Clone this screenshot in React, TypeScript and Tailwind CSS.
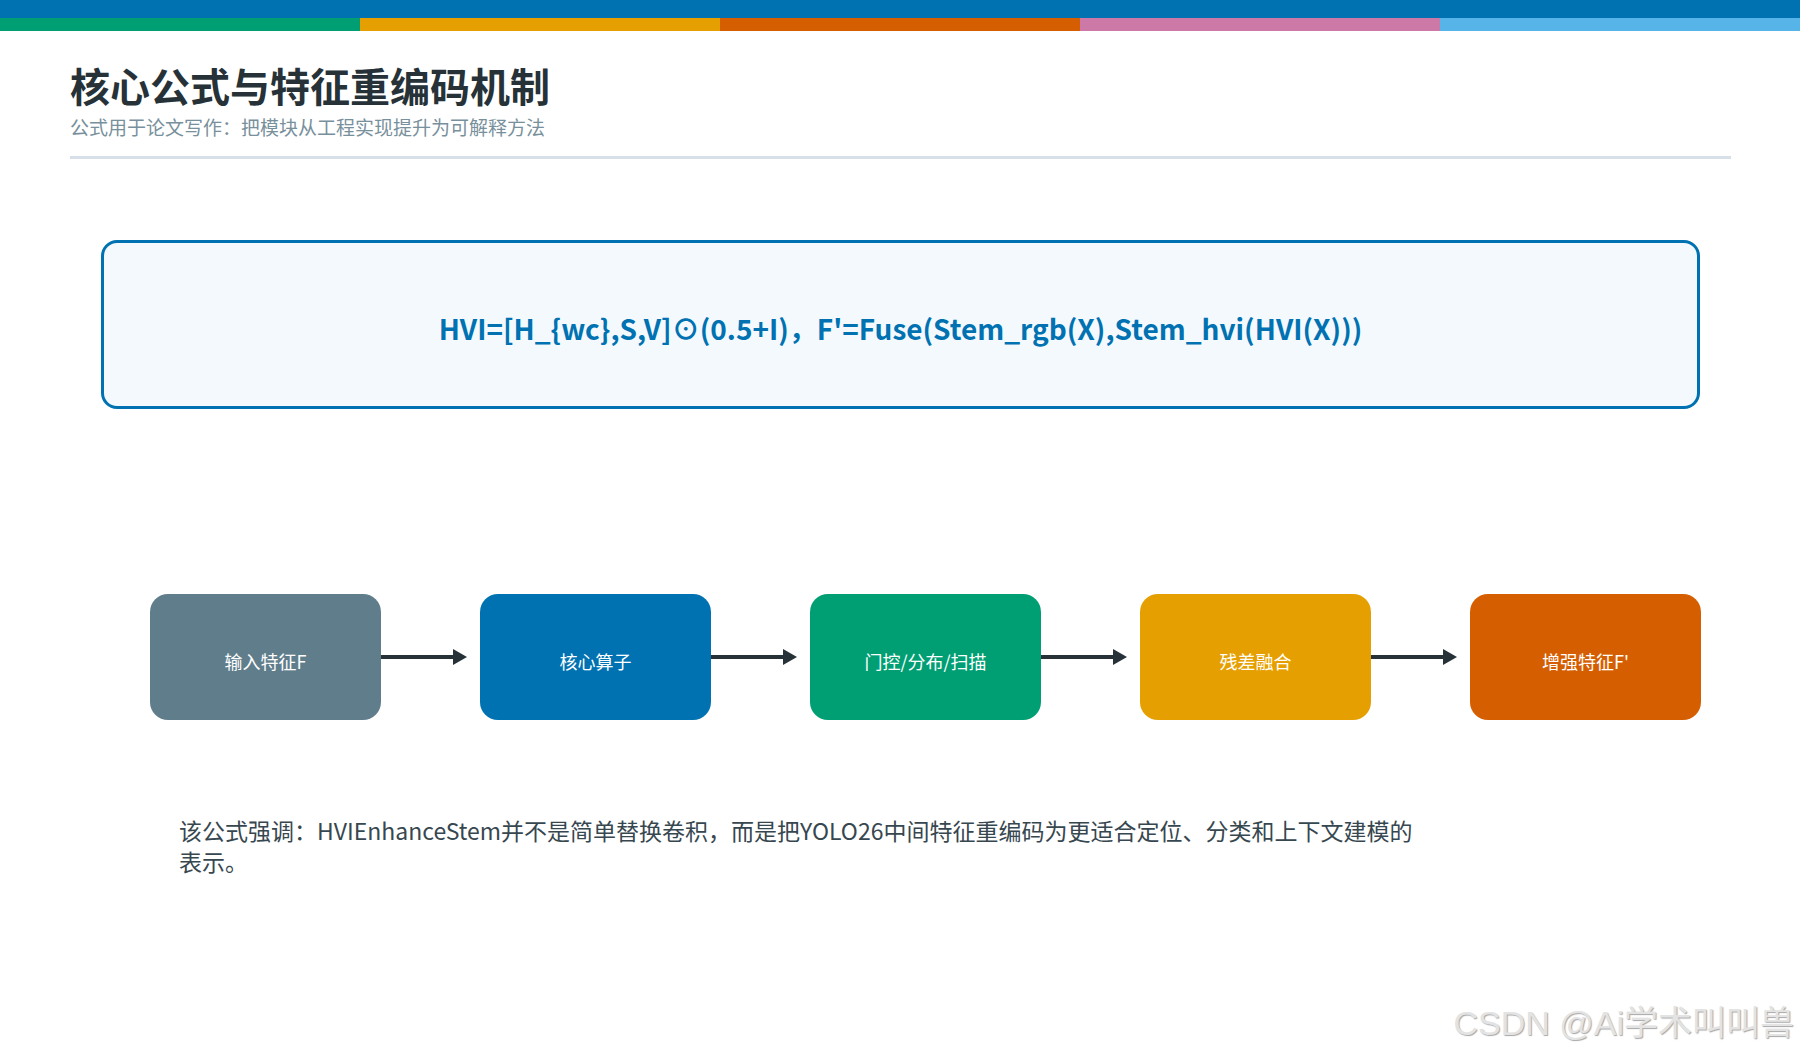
import { Fragment } from "react"

const strip = ["bg-[#009e73]", "bg-[#e69f00]", "bg-[#d55e00]", "bg-[#cc79a7]", "bg-[#56b4e9]"]

const steps = [
  { label: "输入特征F", color: "bg-[#607d8b]" },
  { label: "核心算子", color: "bg-[#0072b2]" },
  { label: "门控/分布/扫描", color: "bg-[#009e73]" },
  { label: "残差融合", color: "bg-[#e69f00]" },
  { label: "增强特征F'", color: "bg-[#d55e00]" },
]

function Arrow() {
  return (
    <div className="flex w-[99px] shrink-0 items-center pr-[13px]">
      <svg width="86" height="18" viewBox="0 0 86 18">
        <line x1="0" y1="9" x2="74" y2="9" stroke="#263238" strokeWidth="4" />
        <polygon points="72,1 86,9 72,17" fill="#263238" />
      </svg>
    </div>
  )
}

export default function App() {
  return (
    <div className="relative h-[1050px] w-full overflow-hidden bg-white font-['Noto_Sans_CJK_SC','Noto_Sans',sans-serif]">
      {/* Top bars */}
      <div className="h-[18px] bg-[#0072b2]" />
      <div className="flex h-[13px]">
        {strip.map((c) => (
          <div key={c} className={`flex-1 ${c}`} />
        ))}
      </div>

      {/* Header */}
      <div className="pl-[70px] pr-[69px]">
        <h1 className="mt-[30px] text-[40px] font-bold leading-[48px] text-[#263238]">核心公式与特征重编码机制</h1>
        <p className="mt-[6px] text-[19px] leading-[24px] text-[#78909c]">公式用于论文写作：把模块从工程实现提升为可解释方法</p>
        <div className="mt-[17px] h-[3px] bg-[#d7dfe8]" />
      </div>

      {/* Formula */}
      <div className="ml-[101px] mr-[100px] mt-[81px] flex h-[169px] items-center justify-center rounded-[16px] border-[3px] border-[#0072b2] bg-[#f4f9fd]">
        <span className="pt-[6px] text-[28px] font-bold text-[#0072b2]">
          HVI=[H_&#123;wc&#125;,S,V]⊙(0.5+I)，F'=Fuse(Stem_rgb(X),Stem_hvi(HVI(X)))
        </span>
      </div>

      {/* Flow */}
      <div className="ml-[150px] mr-[100px] mt-[185px] flex">
        {steps.map((s, i) => (
          <Fragment key={s.label}>
            <div
              className={`flex h-[126px] w-[231px] shrink-0 items-center justify-center rounded-[18px] pt-[8px] text-[18px] text-white ${s.color}`}
            >
              {s.label}
            </div>
            {i < steps.length - 1 && <Arrow />}
          </Fragment>
        ))}
      </div>

      {/* Note */}
      <p className="ml-[179px] mt-[95px] max-w-[1250px] text-[23px] leading-[31px] text-[#37474f]">
        该公式强调：HVIEnhanceStem并不是简单替换卷积，而是把YOLO26中间特征重编码为更适合定位、分类和上下文建模的表示。
      </p>

      {/* Watermark */}
      <div className="absolute bottom-[10px] right-[6px] font-['Liberation_Sans','Noto_Sans_CJK_SC',sans-serif] text-[34px] leading-none text-[#e3e3e3] [text-shadow:1px_1px_1px_rgba(0,0,0,0.35)]">
        CSDN @Ai学术叫叫兽
      </div>
    </div>
  )
}
